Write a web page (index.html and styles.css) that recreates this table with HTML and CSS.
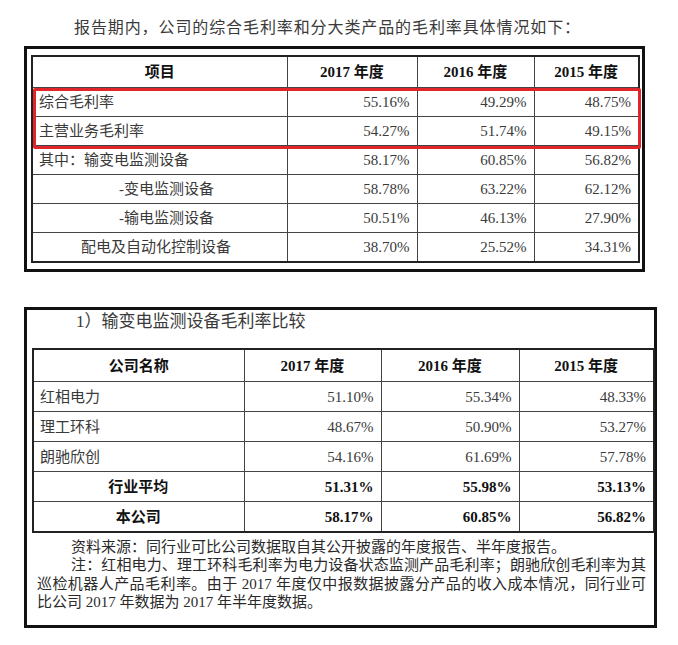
FILE: index.html
```html
<!DOCTYPE html>
<html lang="zh-CN">
<head>
<meta charset="utf-8">
<title>毛利率</title>
<link rel="stylesheet" href="styles.css">
</head>
<body>
<p class="intro">报告期内，公司的综合毛利率和分大类产品的毛利率具体情况如下：</p>

<div class="frame frame-one">
  <table class="grid grid-one">
    <colgroup>
      <col class="c1a"><col class="c1b"><col class="c1c"><col class="c1d">
    </colgroup>
    <thead>
      <tr class="head"><th>项目</th><th>2017 年度</th><th>2016 年度</th><th>2015 年度</th></tr>
    </thead>
    <tbody>
      <tr><td class="name">综合毛利率</td><td>55.16%</td><td>49.29%</td><td>48.75%</td></tr>
      <tr><td class="name">主营业务毛利率</td><td>54.27%</td><td>51.74%</td><td>49.15%</td></tr>
      <tr><td class="name">其中：输变电监测设备</td><td>58.17%</td><td>60.85%</td><td>56.82%</td></tr>
      <tr><td class="name sub">-变电监测设备</td><td>58.78%</td><td>63.22%</td><td>62.12%</td></tr>
      <tr><td class="name sub">-输电监测设备</td><td>50.51%</td><td>46.13%</td><td>27.90%</td></tr>
      <tr><td class="name mid">配电及自动化控制设备</td><td>38.70%</td><td>25.52%</td><td>34.31%</td></tr>
    </tbody>
  </table>
  <div class="highlight"></div>
</div>

<div class="frame frame-two">
  <p class="title">1）输变电监测设备毛利率比较</p>
  <table class="grid grid-two">
    <colgroup>
      <col class="c2a"><col class="c2b"><col class="c2c"><col class="c2d">
    </colgroup>
    <thead>
      <tr class="head head-two"><th>公司名称</th><th>2017 年度</th><th>2016 年度</th><th>2015 年度</th></tr>
    </thead>
    <tbody>
      <tr><td class="name">红相电力</td><td>51.10%</td><td>55.34%</td><td>48.33%</td></tr>
      <tr><td class="name">理工环科</td><td>48.67%</td><td>50.90%</td><td>53.27%</td></tr>
      <tr><td class="name">朗驰欣创</td><td>54.16%</td><td>61.69%</td><td>57.78%</td></tr>
      <tr class="strong"><td class="name center">行业平均</td><td>51.31%</td><td>55.98%</td><td>53.13%</td></tr>
      <tr class="strong"><td class="name center">本公司</td><td>58.17%</td><td>60.85%</td><td>56.82%</td></tr>
    </tbody>
  </table>
  <div class="notes">
    <p class="para">资料来源：同行业可比公司数据取自其公开披露的年度报告、半年度报告。</p>
    <p class="para">
      <span class="ln first">注：红相电力、理工环科毛利率为电力设备状态监测产品毛利率；朗驰欣创毛利率为其</span>
      <span class="ln">巡检机器人产品毛利率。由于 2017 年度仅中报数据披露分产品的收入成本情况，同行业可</span>
      <span class="ln last">比公司 2017 年数据为 2017 年半年度数据。</span>
    </p>
  </div>
</div>
</body>
</html>
```

FILE: styles.css
```css
html, body {
  margin: 0;
  padding: 0;
  background: #fff;
}

body {
  width: 678px;
  font-family: "Liberation Serif", "Noto Sans CJK SC", serif;
  color: #333;
}

.intro {
  margin: 0;
  padding: 18px 0 0 74px;
  font-size: 16px;
  line-height: 20px;
  letter-spacing: 0.9px;
  color: #3a3a3a;
}

.frame {
  box-sizing: border-box;
  margin-left: 24px;
  border: 3px solid #111;
  position: relative;
}

.frame-one {
  margin-top: 8px;
  width: 621px;
  height: 226px;
  padding: 6px 0 0 4px;
}

.frame-two {
  margin-top: 35px;
  width: 633px;
  height: 321px;
  padding: 0 0 0 5px;
}

.grid {
  border-collapse: collapse;
  table-layout: fixed;
  border: 2px solid #222;
}

.grid-one { width: 607px; }
.grid-two { width: 621px; }

.c1a { width: 255px; }
.c1b { width: 130px; }
.c1c { width: 117px; }
.c1d { width: 105px; }

.c2a { width: 211px; }
.c2b { width: 137px; }
.c2c { width: 138px; }
.c2d { width: 135px; }

.grid th,
.grid td {
  border: 1px solid #444;
  padding: 0 7px;
  font-size: 15px;
  height: 28px;
  line-height: 20px;
  white-space: nowrap;
}

.grid td {
  text-align: right;
  color: #3a3a3a;
}

.grid td.name {
  text-align: left;
  padding-left: 6px;
}

.grid td.sub { padding-left: 86px; }
.grid td.mid { padding-left: 48px; }
.grid td.center { text-align: center; }

.head th {
  height: 30px;
  font-weight: bold;
  color: #111;
  text-align: center;
  font-size: 15px;
}

.head-two th { height: 31px; }

.grid-two td { height: 29px; }

.strong td {
  font-weight: bold;
  color: #111;
}

.highlight {
  position: absolute;
  left: 6px;
  top: 39px;
  width: 608px;
  height: 61px;
  box-sizing: border-box;
  border: 3px solid #e0262a;
  border-radius: 2px;
}

.title {
  margin: 1px 0 15px 44px;
  font-size: 17px;
  line-height: 22px;
  color: #3a3a3a;
}

.notes {
  margin: 5px 0 0 5px;
  width: 609px;
  font-size: 15px;
  line-height: 18.4px;
  color: #2a2a2a;
}

.para {
  margin: 0;
  text-indent: 34px;
  text-align: justify;
}

.ln {
  display: block;
  white-space: nowrap;
  text-indent: 0;
  text-align: justify;
  text-align-last: justify;
}

.ln.first {
  text-indent: 34px;
}

.ln.last {
  text-align-last: left;
}
```
